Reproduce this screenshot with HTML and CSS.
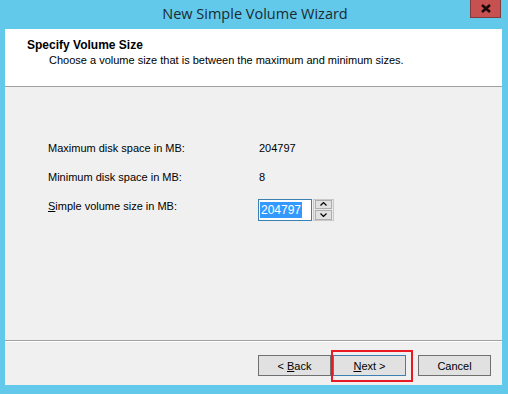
FILE: index.html
```html
<!DOCTYPE html>
<html lang="en">
<head>
  <meta charset="UTF-8">
  <title>New Simple Volume Wizard</title>
  <link rel="stylesheet" href="styles.css">
</head>
<body>
  <div class="window">
    <div class="title-bar">
      <span class="title">New Simple Volume Wizard</span>
      <button class="close-btn" aria-label="Close">
        <svg width="12" height="9" viewBox="0 0 12 9">
          <path d="M2 1 L10 8 M10 1 L2 8" stroke="#1a0a0a" stroke-width="2.6" fill="none"/>
        </svg>
      </button>
    </div>
    <div class="panel">
      <div class="header">
        <div class="header-title">Specify Volume Size</div>
        <div class="header-sub">Choose a volume size that is between the maximum and minimum sizes.</div>
      </div>
      <div class="body">
        <div class="row">
          <span class="label">Maximum disk space in MB:</span>
          <span class="value">204797</span>
        </div>
        <div class="row">
          <span class="label">Minimum disk space in MB:</span>
          <span class="value">8</span>
        </div>
        <div class="row">
          <span class="label"><u>S</u>imple volume size in MB:</span>
          <div class="spin">
            <div class="spin-input"><span class="selected">204797</span></div>
            <div class="spin-buttons">
              <div class="spin-btn">
                <svg width="7" height="4" viewBox="0 0 7 4"><path d="M0.5 3.5 L3.5 0.5 L6.5 3.5" stroke="#000" stroke-width="1.2" fill="none"/></svg>
              </div>
              <div class="spin-btn">
                <svg width="7" height="4" viewBox="0 0 7 4"><path d="M0.5 0.5 L3.5 3.5 L6.5 0.5" stroke="#000" stroke-width="1.2" fill="none"/></svg>
              </div>
            </div>
          </div>
        </div>
      </div>
      <div class="footer">
        <button class="btn">&lt; <u>B</u>ack</button>
        <button class="btn btn-default"><u>N</u>ext &gt;<span class="highlight"></span></button>
        <button class="btn btn-cancel">Cancel</button>
      </div>
    </div>
  </div>
</body>
</html>
```

FILE: styles.css
```css
body, html {
  margin: 0;
  padding: 0;
  width: 508px;
  height: 394px;
  overflow: hidden;
  background: #62c9ea;
  font-family: "Liberation Sans", Arial, sans-serif;
  font-size: 11px;
  color: #000;
}
.window {
  display: flex;
  flex-direction: column;
  padding: 0 6px 6px 5px;
}
.title-bar {
  height: 29px;
  position: relative;
  display: flex;
  justify-content: center;
}
.title {
  font-family: "Open Sans", "Noto Sans", sans-serif;
  font-size: 14.5px;
  color: #1b2a33;
  line-height: 27px;
  margin-left: 3px;
}
.close-btn {
  position: absolute;
  top: 0;
  right: 1px;
  width: 31px;
  height: 18px;
  padding: 0;
  background: #c75050;
  border: 1px solid #7d3b3b;
  border-top: none;
  display: flex;
  align-items: center;
  justify-content: center;
}
.panel {
  background: #f0f0f0;
  display: flex;
  flex-direction: column;
}
.header {
  background: #fff;
  height: 58px;
  border-bottom: 1px solid #a0a0a0;
  padding: 0 0 0 22px;
  box-sizing: border-box;
}
.header-title {
  font-weight: bold;
  font-size: 12px;
  margin-top: 9px;
  line-height: 14px;
}
.header-sub {
  margin-left: 22px;
  margin-top: 2px;
  line-height: 13px;
}
.body {
  height: 254px;
  box-sizing: border-box;
  padding: 47px 0 0 43px;
  border-bottom: 1px solid #a0a0a0;
}
.row {
  display: flex;
  align-items: center;
  height: 29px;
}
.label {
  width: 211px;
  line-height: 13px;
}
.value {
  line-height: 13px;
}
.spin {
  display: flex;
  margin-top: 6px;
  margin-left: -1px;
}
.spin-input {
  width: 51px;
  height: 20px;
  background: #fff;
  border: 1px solid #3c7fb1;
  display: flex;
  align-items: center;
  padding-left: 1px;
}
.selected {
  background: #3399ff;
  color: #fff;
  line-height: 16px;
  font-size: 12px;
  padding: 0 1px;
}
.spin-buttons {
  display: flex;
  flex-direction: column;
  gap: 1px;
  margin-left: 1px;
  padding: 0 1px;
  background: #e8e8e8;
  border: 1px solid #c8c8c8;
  height: 20px;
  justify-content: center;
}
.spin-btn {
  width: 15px;
  height: 8px;
  background: #e1e1e1;
  border: 1px solid #adadad;
  display: flex;
  align-items: center;
  justify-content: center;
}
.footer {
  height: 44px;
  border-top: 1px solid #fff;
  box-sizing: border-box;
  display: flex;
  justify-content: flex-end;
  align-items: flex-start;
  padding: 13px 11px 0 0;
}
.btn {
  width: 73px;
  height: 21px;
  background: #e1e1e1;
  border: 1px solid #707070;
  font-family: "Liberation Sans", Arial, sans-serif;
  font-size: 11px;
  color: #000;
  padding: 0;
  position: relative;
  margin-left: 2px;
}
.btn-default {
  border-color: #3c7fb1;
}
.btn-cancel {
  margin-left: 12px;
}
.highlight {
  position: absolute;
  top: -6px;
  left: -3px;
  right: -8px;
  bottom: -7px;
  border: 2px solid #e81b23;
}
```
